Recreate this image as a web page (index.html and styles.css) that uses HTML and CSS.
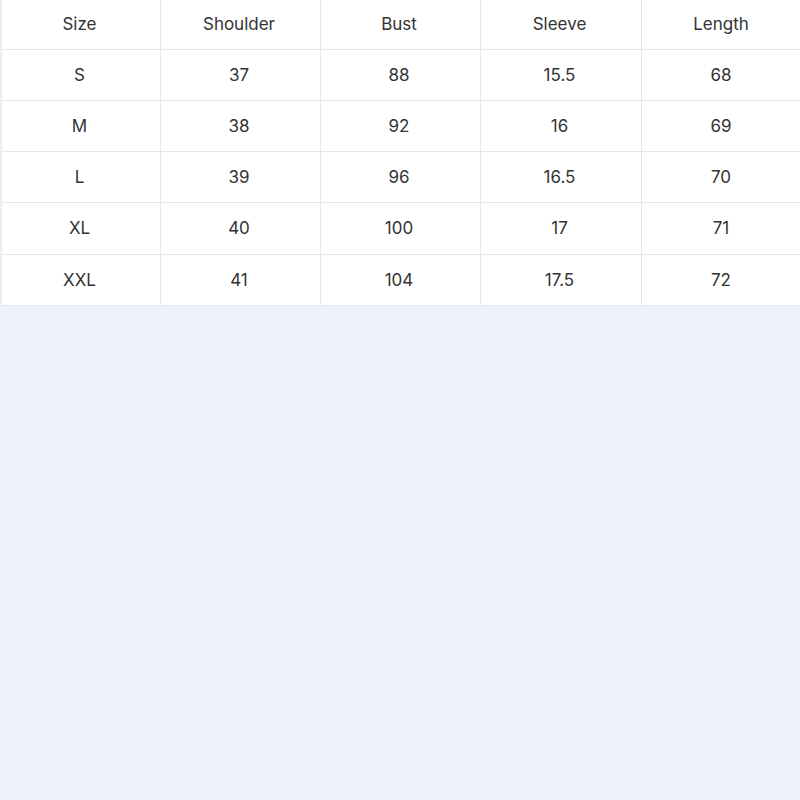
FILE: index.html
```html
<!DOCTYPE html>
<html>
<head>
<meta charset="utf-8">
<link rel="stylesheet" href="styles.css">
</head>
<body>
<table class="size-table">
  <colgroup>
    <col class="c1"><col class="c2"><col class="c3"><col class="c4"><col class="c5">
  </colgroup>
  <thead>
    <tr><th>Size</th><th>Shoulder</th><th>Bust</th><th>Sleeve</th><th>Length</th></tr>
  </thead>
  <tbody>
    <tr><td>S</td><td>37</td><td>88</td><td>15.5</td><td>68</td></tr>
    <tr><td>M</td><td>38</td><td>92</td><td>16</td><td>69</td></tr>
    <tr><td>L</td><td>39</td><td>96</td><td>16.5</td><td>70</td></tr>
    <tr class="tall"><td>XL</td><td>40</td><td>100</td><td>17</td><td>71</td></tr>
    <tr><td>XXL</td><td>41</td><td>104</td><td>17.5</td><td>72</td></tr>
  </tbody>
</table>
</body>
</html>
```
FILE: styles.css
```css
html, body {
  margin: 0;
  padding: 0;
  background: #eef1f9;
}
body {
  font-family: Inter, "Noto Sans", sans-serif;
  color: #333;
  overflow: hidden;
}
.size-table {
  border-collapse: collapse;
  table-layout: fixed;
  width: 802px;
  margin-left: 1px;
  margin-top: -1px;
  background: #fff;
}
.c1 { width: 159px; }
.c2 { width: 160px; }
.c3 { width: 160px; }
.c4 { width: 161px; }
.c5 { width: 162px; }
.size-table th,
.size-table td {
  border: 1px solid #e2e7f0;
  text-align: center;
  font-size: 17px;
  font-weight: 400;
  padding: 0 3px 1px 0;
  height: 49px;
  color: #333;
}
.size-table thead th {
  height: 48px;
}
.size-table tr.tall td {
  height: 50px;
}
```
